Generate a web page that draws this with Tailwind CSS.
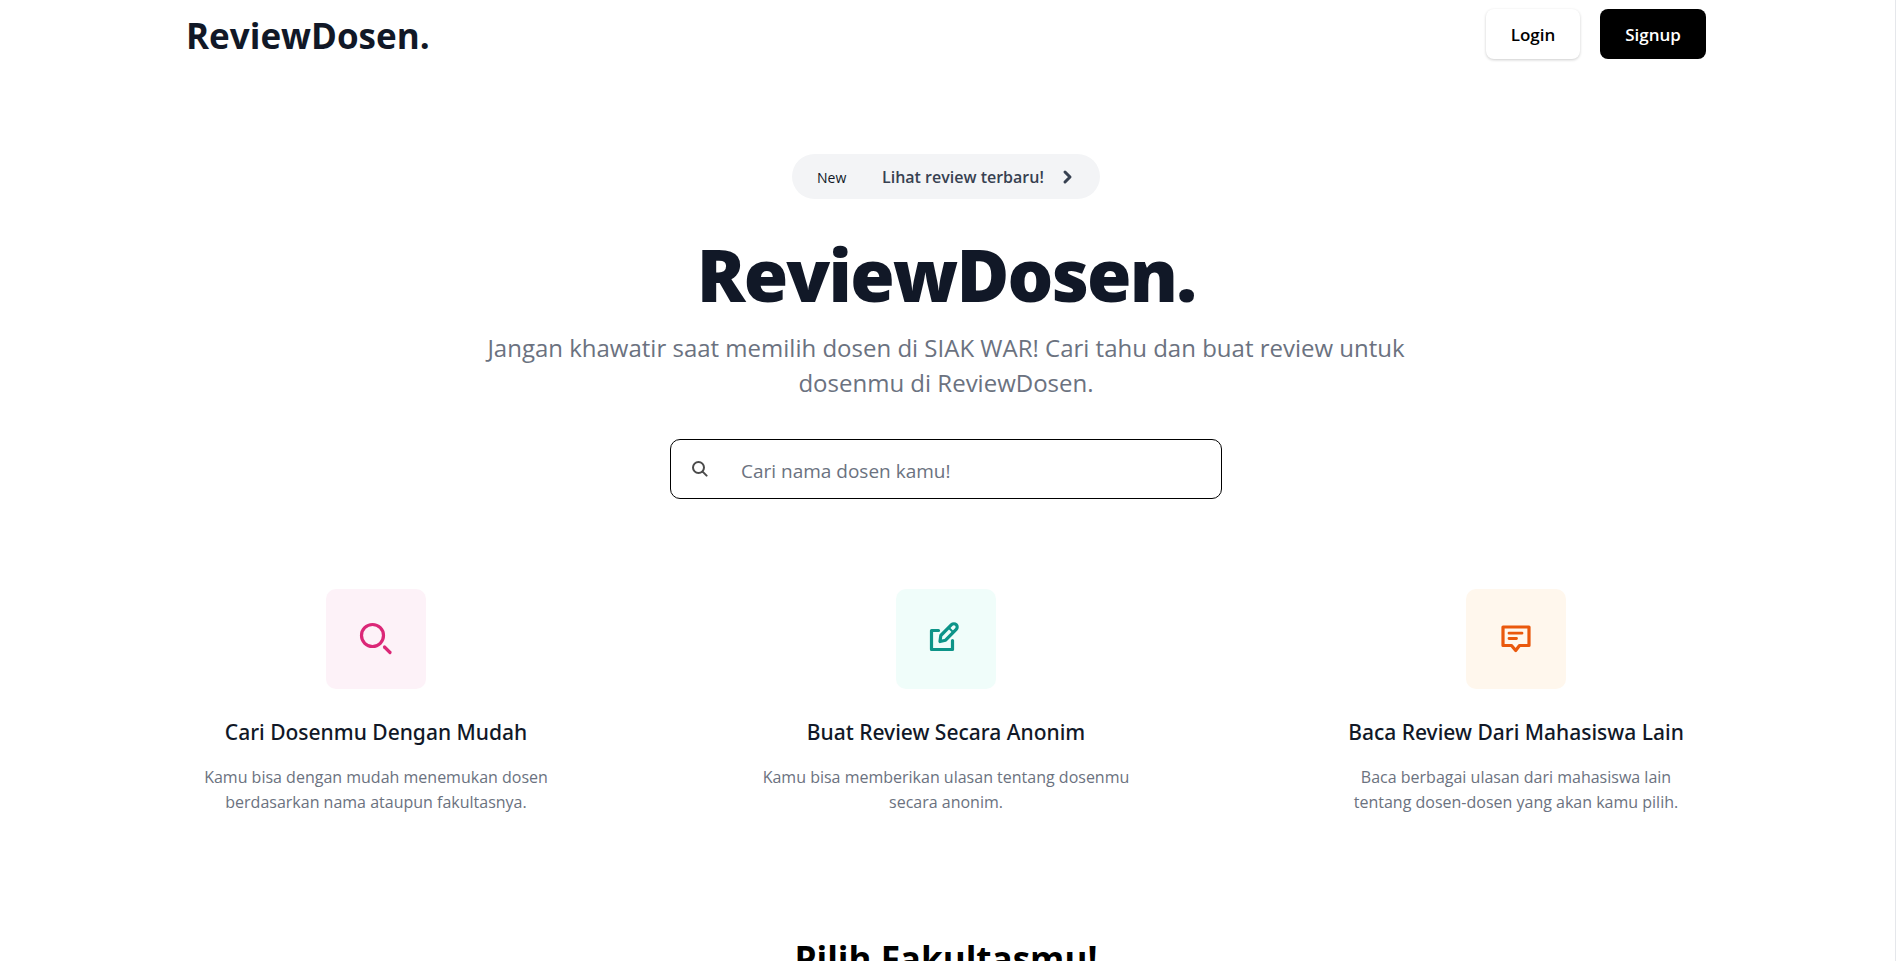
<!DOCTYPE html>
<html lang="id">
<head>
<meta charset="utf-8">
<meta name="viewport" content="width=device-width, initial-scale=1">
<title>ReviewDosen.</title>
<script src="https://cdn.jsdelivr.net/npm/@tailwindcss/browser@4"></script>
</head>
<body class="h-screen overflow-hidden border-r border-gray-200 bg-white pr-[3px] font-['Segoe_UI','Open_Sans',sans-serif] text-[#111827]">
<header class="mx-auto flex w-full max-w-[1520px] items-center justify-between pt-[9px]">
  <a href="#" class="pt-1 text-[35px] leading-[46px] font-bold">ReviewDosen.</a>
  <nav class="flex gap-5">
    <button type="button" class="h-[50px] w-[94px] rounded-lg bg-white pt-[2px] text-[17px] font-semibold text-black shadow-[0_1px_3px_rgba(0,0,0,0.2)]">Login</button>
    <button type="button" class="h-[50px] w-[106px] rounded-lg bg-black pt-[2px] text-[17px] font-semibold text-white">Signup</button>
  </nav>
</header>
<main>
  <section class="flex flex-col items-center pt-[95px] text-center">
    <a href="#" class="flex h-[45px] w-[308px] items-center rounded-full bg-[#f3f4f6] px-[25px] pt-px text-[#374151]">
      <span class="w-[65px] text-left text-[14px] text-[#111827]">New</span>
      <span class="text-[16px] font-semibold whitespace-nowrap">Lihat review terbaru!</span>
      <svg class="ml-auto h-[25px] w-[14px]" viewBox="0 0 14 25" fill="none" stroke="currentColor" stroke-width="3" stroke-linecap="round" stroke-linejoin="round"><path d="M4 7l5 5-5 5"/></svg>
    </a>
    <h1 class="mt-[38px] text-[72px] leading-[75px] font-extrabold tracking-tight">ReviewDosen.</h1>
    <p class="mt-[18px] text-[24px] leading-[35px] text-[#6b7280]">Jangan khawatir saat memilih dosen di SIAK WAR! Cari tahu dan buat review untuk<br>dosenmu di ReviewDosen.</p>
    <form class="mt-[39px] flex h-[60px] w-[552px] items-center rounded-[10px] border border-black">
      <label for="search" class="pl-[21px]" aria-label="Cari dosen">
        <svg class="size-4" viewBox="0 0 16 16" fill="none" stroke="#4b4b4b" stroke-width="2" stroke-linecap="round"><circle cx="6.5" cy="6.5" r="5.500"/><path d="M10.6 10.6l4 4"/></svg>
      </label>
      <input id="search" type="text" placeholder="Cari nama dosen kamu!" class="ml-[33px] h-full min-w-0 grow bg-transparent pt-1 text-[19px] outline-none placeholder:text-[#6b7280]">
    </form>
  </section>
  <section class="mx-auto mt-[90px] flex w-full max-w-[1520px] justify-between text-center">
    <article class="flex w-1/4 flex-col items-center">
      <div class="flex size-[100px] items-center justify-center rounded-[10px] bg-[#fdf2f8]">
        <svg class="size-10" viewBox="0 0 40 40" fill="none" stroke="#db2777" stroke-width="3.2" stroke-linecap="round"><circle cx="16.5" cy="16.5" r="11"/><path d="M28.5 28l5.5 5.5"/></svg>
      </div>
      <h2 class="mt-[26px] font-['Noto_Sans',sans-serif] text-[21px] leading-[35px] font-medium">Cari Dosenmu Dengan Mudah</h2>
      <p class="mt-[15px] text-[16px] leading-[25px] whitespace-nowrap text-[#6b7280]">Kamu bisa dengan mudah menemukan dosen<br>berdasarkan nama ataupun fakultasnya.</p>
    </article>
    <article class="flex w-1/4 flex-col items-center">
      <div class="flex size-[100px] items-center justify-center rounded-[10px] bg-[#f0fdfa]">
        <svg class="size-10" viewBox="0 0 40 40" fill="none" stroke="#0d9488" stroke-width="3.2" stroke-linecap="round" stroke-linejoin="round"><path d="M12.500 11.500H5.500V30.500H26.500V21.500"/><path d="M14 22.500l.8-6L25.500 5.700a3.300 3.300 0 0 1 4.700 4.700L19.600 21.200z"/><path d="M23 9l4 4" stroke-width="2"/></svg>
      </div>
      <h2 class="mt-[26px] font-['Noto_Sans',sans-serif] text-[21px] leading-[35px] font-medium">Buat Review Secara Anonim</h2>
      <p class="mt-[15px] text-[16px] leading-[25px] whitespace-nowrap text-[#6b7280]">Kamu bisa memberikan ulasan tentang dosenmu<br>secara anonim.</p>
    </article>
    <article class="flex w-1/4 flex-col items-center">
      <div class="flex size-[100px] items-center justify-center rounded-[10px] bg-[#fff7ed]">
        <svg class="size-10" viewBox="0 0 40 40" fill="none" stroke="#ea580c" stroke-width="3.2" stroke-linecap="round" stroke-linejoin="round"><path d="M7 8H33V26.500H23.500L19.700 31.500L15.500 26.500H7z"/><path d="M13 14.200H26M13 19.500H20.500" stroke-width="2.800"/></svg>
      </div>
      <h2 class="mt-[26px] font-['Noto_Sans',sans-serif] text-[21px] leading-[35px] font-medium">Baca Review Dari Mahasiswa Lain</h2>
      <p class="mt-[15px] text-[16px] leading-[25px] whitespace-nowrap text-[#6b7280]">Baca berbagai ulasan dari mahasiswa lain<br>tentang dosen-dosen yang akan kamu pilih.</p>
    </article>
  </section>
  <section class="mt-[121px] text-center">
    <h2 class="text-[35px] leading-[45px] font-bold text-black">Pilih Fakultasmu!</h2>
  </section>
</main>
</body>
</html>
